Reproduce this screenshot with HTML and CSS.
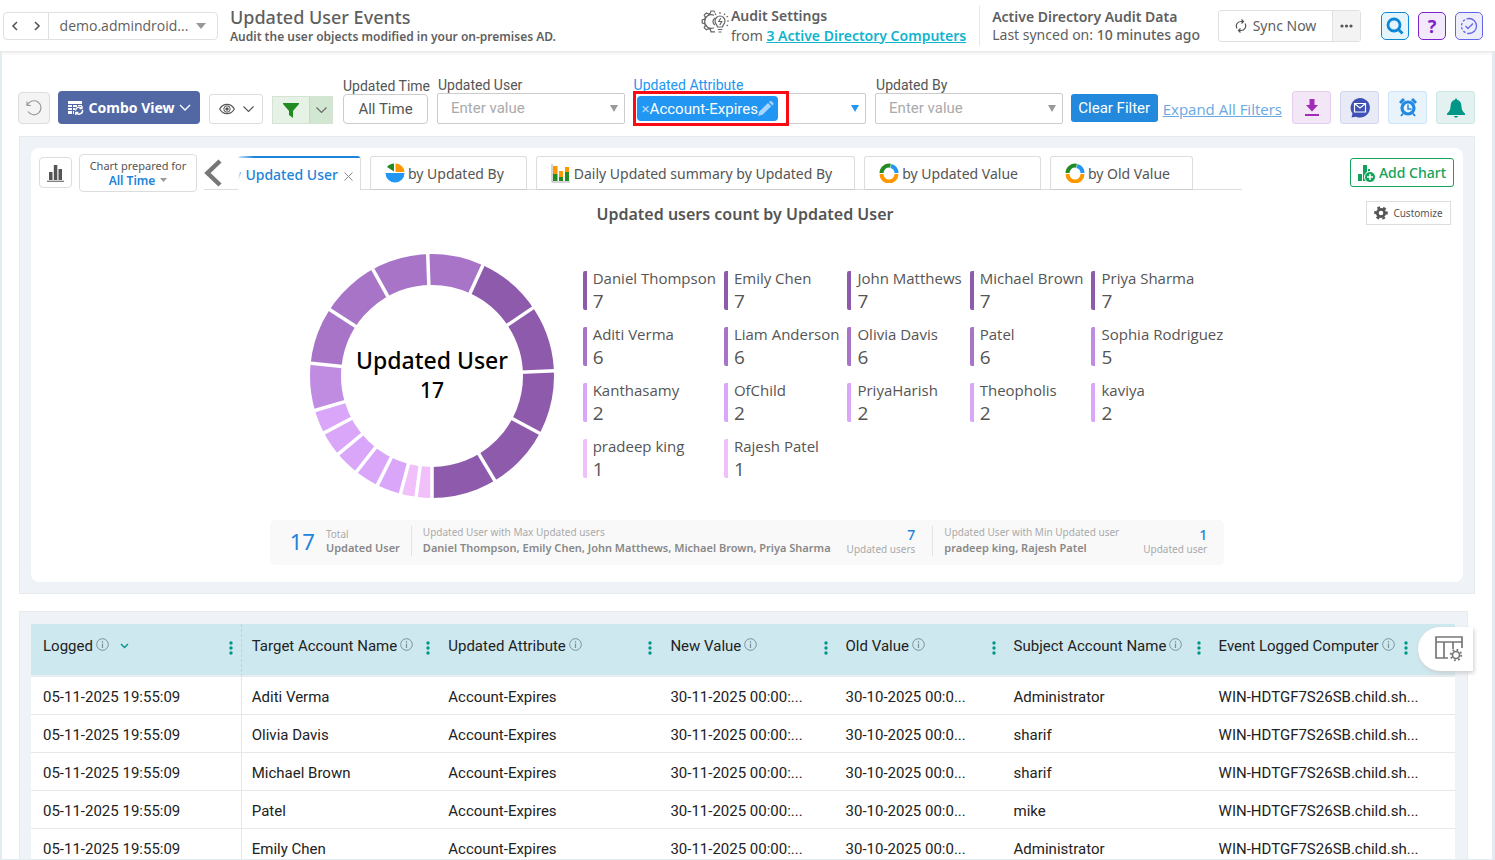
FILE: index.html
```html
<!DOCTYPE html>
<html lang="en">
<head>
<meta charset="utf-8">
<title>Updated User Events</title>
<link rel="stylesheet" href="styles.css">
</head>
<body>
<header class="topbar">
  <div class="nav">
    <button class="nav-btn" aria-label="Back"><svg width="8" height="10" viewBox="0 0 8 10"><path d="M6 1 2 5l4 4" fill="none" stroke="#555" stroke-width="1.6"/></svg></button>
    <button class="nav-btn" aria-label="Forward"><svg width="8" height="10" viewBox="0 0 8 10"><path d="M2 1l4 4-4 4" fill="none" stroke="#555" stroke-width="1.6"/></svg></button>
    <button class="tenant"><span>demo.admindroid...</span><svg width="10" height="6" viewBox="0 0 10 6"><path d="M0 0h10L5 6z" fill="#999"/></svg></button>
  </div>
  <div class="heading">
    <h1>Updated User Events</h1>
    <p>Audit the user objects modified in your on-premises AD.</p>
  </div>
  <div class="audit">
    <svg width="28" height="24" viewBox="0 0 28 24" fill="none" stroke="#666" stroke-width="1.2">
      <path d="M14 2.5l-1-1.5h-3l-.8 2.4-1.6.7L5.300 3 3.200 5.200l1.200 2.200-.7 1.600L1.200 10v3l2.500.8.7 1.600-1.200 2.300 2.100 2.100 2.300-1.200 1.600.7.800 2.500h4M13 5.200a6.800 6.800 0 1 0 0 12.600M14 8a4 4 0 0 0 0 7"/>
      <path d="M16.500 17c0-2-2.500-3-2.500-6a5 5 0 0 1 10 0c0 3-2.500 4-2.500 6zM16.800 19.500h4.500M17.500 22h3M19.800 8l-2 3.500h3l-2 3.500"/>
      <path d="M19 2v2M14 3.500l1 1.500M24 3.500l-1 1.500M25.500 7l1.500-.8M26 11h2M25.500 15l1.500.8"/>
    </svg>
    <div><strong>Audit Settings</strong><div>from <a href="#">3 Active Directory Computers</a></div></div>
  </div>
  <div class="sync-info"><strong>Active Directory Audit Data</strong><div>Last synced on: <b>10 minutes ago</b></div></div>
  <div class="sync">
    <button class="sync-now"><svg width="12" height="14" viewBox="0 0 12 14" fill="none" stroke="#555" stroke-width="1.200"><path d="M2 9.500A4.600 4.600 0 0 1 6 2.500h2M10 4.500a4.600 4.600 0 0 1-4 7H4M6.500.5l2 2-2 2M5.500 9.500l-2 2 2 2"/></svg>Sync Now</button>
    <button class="sync-more" aria-label="More sync options"><svg width="13" height="4" viewBox="0 0 13 4" fill="#555"><circle cx="2" cy="2" r="1.600"/><circle cx="6.500" cy="2" r="1.600"/><circle cx="11" cy="2" r="1.600"/></svg></button>
  </div>
  <div class="tools">
    <button class="tool tool-search" aria-label="Search"><svg width="18" height="18" viewBox="0 0 18 18" fill="none" stroke="#0f87d6" stroke-width="2.800"><circle cx="8" cy="8" r="6"/><path d="M11.500 11.500l5 5"/></svg></button>
    <button class="tool tool-help" aria-label="Help">?</button>
    <button class="tool tool-check" aria-label="Status"><svg width="18" height="18" viewBox="0 0 18 18" fill="none" stroke="#6366e8" stroke-width="1.300"><path d="M9 1.500a7.500 7.500 0 0 1 0 15M5.500 9l2.500 2.500L13 6.500"/><path d="M9 1.500a7.500 7.500 0 0 0 0 15" stroke-dasharray="2.500 1.800"/></svg></button>
  </div>
</header>

<main class="page">
  <div class="toolbar">
    <button class="btn-reset" aria-label="Reset"><svg width="16" height="16" viewBox="0 0 16 16" fill="none" stroke="#999" stroke-width="1.200"><path d="M1.500 5A7 7 0 1 1 2 11.500M1 1.500V5.500h4"/></svg></button>
    <button class="btn-combo">
      <svg width="17" height="16" viewBox="0 0 17 16"><path d="M1 1h14v3H1zM1 5h4v2H1zM6 5h4v2H6zM1 8h4v2H1zM6 8h2v2H6zM1 11h4v3H1zM6 11h1v3H6zM11 5h4v1h-4z" fill="#fff"/><path d="M8.500 10.500a3.500 3.500 0 0 1 6-2.300M15.500 10a3.500 3.500 0 0 1-6 3M15 6v2.600h-2.600M8.800 15v-2.500h2.600" fill="none" stroke="#fff" stroke-width="1.400"/></svg>
      <span>Combo View</span>
      <svg width="12" height="7" viewBox="0 0 12 7"><path d="M1 1l5 5 5-5" fill="none" stroke="#fff" stroke-width="1.300"/></svg>
    </button>
    <button class="btn-eye" aria-label="Visibility">
      <svg width="16" height="12" viewBox="0 0 16 12"><path d="M.7 6C4-.2 12-.2 15.300 6 12 12.200 4 12.200.7 6z" fill="none" stroke="#555" stroke-width="1.200"/><circle cx="8" cy="6" r="3.200" fill="none" stroke="#555"/><circle cx="8" cy="6" r="1.700" fill="#555"/></svg>
      <svg width="11" height="6" viewBox="0 0 11 6"><path d="M.5.5l5 5 5-5" fill="none" stroke="#555" stroke-width="1.100"/></svg>
    </button>
    <div class="filter-toggle">
      <button aria-label="Filter"><svg width="16" height="15" viewBox="0 0 16 15"><path d="M0 0h16v1L10 8v7l-4-3V8L0 1z" fill="#218c21"/></svg></button>
      <button class="filter-menu" aria-label="Filter menu"><svg width="11" height="6" viewBox="0 0 11 6"><path d="M.5.5l5 5 5-5" fill="none" stroke="#666" stroke-width="1.100"/></svg></button>
    </div>
    <div class="filters">
      <div class="field field-time"><label for="f-time">Updated Time</label><button id="f-time" class="time-btn">All Time</button></div>
      <div class="field"><label for="f-user">Updated User</label><div class="combo"><input id="f-user" placeholder="Enter value"><svg width="8" height="7" viewBox="0 0 8 7"><path d="M0 0h8L4 7z" fill="#999"/></svg></div></div>
      <div class="field field-wide"><label for="f-attr" class="active">Updated Attribute</label>
        <div class="combo"><div class="chip"><button aria-label="Remove">×</button><span>Account-Expires</span><svg width="16" height="15" viewBox="0 0 16 15" fill="#a9d5fb"><path d="M0 15l1.300-4.500L10 2l3.200 3.200-8.700 8.500zM11 1l1-.8c.6-.4 1.300-.2 1.700.2l1.500 1.500c.5.500.5 1.200 0 1.700l-.9.8z"/></svg></div><input id="f-attr"><svg width="8" height="7" viewBox="0 0 8 7"><path d="M0 0h8L4 7z" fill="#2196f3"/></svg><div class="marker"></div></div></div>
      <div class="field"><label for="f-by">Updated By</label><div class="combo"><input id="f-by" placeholder="Enter value"><svg width="8" height="7" viewBox="0 0 8 7"><path d="M0 0h8L4 7z" fill="#999"/></svg></div></div>
    </div>
    <button class="btn-clear">Clear Filter</button>
    <a class="expand" href="#">Expand All Filters</a>
    <div class="actions">
      <button class="act act-download" aria-label="Download"><svg width="16" height="17" viewBox="0 0 16 17" fill="#a22ab8"><path d="M5.500 0h5v6H14l-6 6.500L2 6h3.500zM1 15h14v2H1z"/></svg></button>
      <button class="act act-mail" aria-label="Mail"><svg width="20" height="20" viewBox="0 0 20 20"><path d="M10 0a9.800 9.800 0 1 1-4 18.700L1.500 19.500l1-4A9.800 9.800 0 0 1 10 0z" fill="#3f51b5"/><path d="M4.500 5.500h11v8.500h-11zM4.500 5.500l5.500 4.500 5.500-4.500" fill="none" stroke="#fff" stroke-width="1.200"/></svg></button>
      <button class="act act-alarm" aria-label="Schedule"><svg width="18" height="19" viewBox="0 0 18 19" fill="none" stroke="#2389e0"><circle cx="9" cy="10" r="6" stroke-width="3.200" fill="#e8f3fc"/><path d="M9 6.500V11h3.500" stroke-width="1.500"/><path d="M1 5l4-4M17 5l-4-4" stroke-width="3"/><path d="M4 15.500L2 18M14 15.500l2 2.500" stroke-width="2"/></svg></button>
      <button class="act act-bell" aria-label="Alerts"><svg width="18" height="20" viewBox="0 0 18 20" fill="#009688"><path d="M9 0l1.200 1.800c3 .8 4 3.200 4.200 6.200.2 4 1.600 6 3.600 7.500v1.500H0v-1.500c2-1.500 3.400-3.500 3.600-7.500.2-3 1.200-5.400 4.200-6.200zM6.500 18h5L9 20z"/></svg></button>
    </div>
  </div>

  <section class="panel chart-panel">
    <div class="card">
      <div class="chart-head">
        <button class="chart-type" aria-label="Chart type"><svg width="17" height="18" viewBox="0 0 17 18" fill="#555"><path d="M2 8h3.500v8H2zM6.800 1h3.500v15H6.800zM11.500 5H15v11h-3.500zM0 16.800h17v1H0z"/></svg></button>
        <button class="chart-range"><span>Chart prepared for</span><b>All Time <svg width="7" height="4" viewBox="0 0 7 4"><path d="M0 0h7L3.500 4z" fill="#999"/></svg></b></button>
        <div class="tabs" role="tablist">
          <button class="tab-prev" aria-label="Previous"><svg width="18" height="28" viewBox="0 0 18 28"><path d="M16 2L3.500 14 16 26" fill="none" stroke="#777" stroke-width="4.500"/></svg></button>
          <button class="tab tab-active" role="tab"><span class="tab-fade">y</span><span>Updated User</span><svg width="9" height="9" viewBox="0 0 9 9"><path d="M.5.5l8 8M8.500.5l-8 8" stroke="#888"/></svg></button>
          <button class="tab" role="tab"><svg width="20" height="20" viewBox="0 0 20 20"><path d="M10 10H.5a9.500 9.500 0 0 0 19 0z" fill="#2196f3"/><path d="M10.500 9V.5A9 9 0 0 1 19.500 9z" fill="#ff9800"/><path d="M9 8.500L2 4A9 9 0 0 1 9 .5z" fill="#228b22"/></svg>by Updated By</button>
          <button class="tab tab-daily" role="tab"><svg width="20" height="20" viewBox="0 0 20 20"><path d="M1 1v18h18" fill="none" stroke="#aaa"/><path d="M2 3h4.500v8H2zM8 8h4v6H8zM14 4h4v5h-4z" fill="#ff9800"/><path d="M2 11h4.500v7H2zM8 14h4v4H8zM14 9h4v9h-4z" fill="#228b22"/></svg>Daily Updated summary by Updated By</button>
          <button class="tab" role="tab"><svg width="20" height="20" viewBox="0 0 20 20" fill="none" stroke-width="4"><path d="M2.500 10a7.500 7.500 0 0 1 9-7.300" stroke="#228b22"/><path d="M12 3a7.500 7.500 0 0 1 5.500 7" stroke="#2196f3"/><path d="M2.500 11a7.500 7.500 0 0 0 15 0" stroke="#ff9800"/></svg>by Updated Value</button>
          <button class="tab" role="tab"><svg width="20" height="20" viewBox="0 0 20 20" fill="none" stroke-width="4"><path d="M2.500 10a7.500 7.500 0 0 1 9-7.300" stroke="#228b22"/><path d="M12 3a7.500 7.500 0 0 1 5.500 7" stroke="#2196f3"/><path d="M2.500 11a7.500 7.500 0 0 0 15 0" stroke="#ff9800"/></svg>by Old Value</button>
        </div>
        <button class="add-chart"><svg width="17" height="18" viewBox="0 0 17 18"><path d="M0 10h4v7H0zM5 1h4v16H5zM10 5h2v4h-2z" fill="#12a35b"/><circle cx="12" cy="13" r="5.500" fill="#12a35b" stroke="#fff"/><path d="M12 10v6M9 13h6" stroke="#fff" stroke-width="1.500"/></svg>Add Chart</button>
      </div>
      <div class="chart-title">
        <h2>Updated users count by Updated User</h2>
        <button class="customize"><svg width="14" height="14" viewBox="0 0 14 14"><circle cx="7" cy="7" r="3.700" fill="none" stroke="#555" stroke-width="2.800"/><circle cx="7" cy="7" r="5.700" fill="none" stroke="#555" stroke-width="2.200" stroke-dasharray="2.980 2.980" transform="rotate(-15 7 7)"/></svg>Customize</button>
      </div>
      <div class="chart-body">
        <svg class="donut" width="246" height="246" viewBox="-123 -123 246 246">
          <g fill="none" stroke-width="31" transform="rotate(90)">
            <circle r="106.500" pathLength="360" stroke="#f1bff9" stroke-dasharray="15 345"/>
            <circle r="106.500" pathLength="360" stroke="#d9a6f9" stroke-dasharray="58.600 301.400" stroke-dashoffset="-15"/>
            <circle r="106.500" pathLength="360" stroke="#c08ce2" stroke-dasharray="22.400 337.600" stroke-dashoffset="-73.600"/>
            <circle r="106.500" pathLength="360" stroke="#a774c8" stroke-dasharray="108.700 251.300" stroke-dashoffset="-96"/>
            <circle r="106.500" pathLength="360" stroke="#8e5bac" stroke-dasharray="155.300 204.700" stroke-dashoffset="-204.700"/>
          </g>
          <g stroke="#fff" stroke-width="3.500">
            <path d="M0 88v36"/><path d="M0 88v36" transform="rotate(7.500)"/><path d="M0 88v36" transform="rotate(15)"/><path d="M0 88v36" transform="rotate(26.600)"/><path d="M0 88v36" transform="rotate(38.300)"/><path d="M0 88v36" transform="rotate(50.200)"/><path d="M0 88v36" transform="rotate(62.200)"/><path d="M0 88v36" transform="rotate(73.600)"/><path d="M0 88v36" transform="rotate(96)"/><path d="M0 88v36" transform="rotate(123)"/><path d="M0 88v36" transform="rotate(151)"/><path d="M0 88v36" transform="rotate(178)"/><path d="M0 88v36" transform="rotate(204.700)"/><path d="M0 88v36" transform="rotate(236)"/><path d="M0 88v36" transform="rotate(267.500)"/><path d="M0 88v36" transform="rotate(298)"/><path d="M0 88v36" transform="rotate(329)"/>
          </g>
          <text class="donut-name" y="-7">Updated User</text>
          <text class="donut-total" y="22">17</text>
        </svg>
        <ul class="legend">
          <li class="c7">Daniel Thompson<b>7</b></li><li class="c7">Emily Chen<b>7</b></li><li class="c7">John Matthews<b>7</b></li><li class="c7">Michael Brown<b>7</b></li><li class="c7">Priya Sharma<b>7</b></li>
          <li class="c6">Aditi Verma<b>6</b></li><li class="c6">Liam Anderson<b>6</b></li><li class="c6">Olivia Davis<b>6</b></li><li class="c6">Patel<b>6</b></li><li class="c5">Sophia Rodriguez<b>5</b></li>
          <li class="c2">Kanthasamy<b>2</b></li><li class="c2">OfChild<b>2</b></li><li class="c2">PriyaHarish<b>2</b></li><li class="c2">Theopholis<b>2</b></li><li class="c2">kaviya<b>2</b></li>
          <li class="c1">pradeep king<b>1</b></li><li class="c1">Rajesh Patel<b>1</b></li>
        </ul>
      </div>
      <div class="summary">
        <div class="sum-total"><span class="big">17</span><div>Total<b>Updated User</b></div></div>
        <div class="sum-item"><div>Updated User with Max Updated users<b>Daniel Thompson, Emily Chen, John Matthews, Michael Brown, Priya Sharma</b></div><div class="sum-count"><em>7</em>Updated users</div></div>
        <div class="sum-item sum-min"><div>Updated User with Min Updated user<b>pradeep king, Rajesh Patel</b></div><div class="sum-count"><em>1</em>Updated user</div></div>
      </div>
    </div>
  </section>

  <section class="panel grid-panel">
    <svg width="0" height="0" class="defs"><symbol id="info" viewBox="0 0 13 13"><circle cx="6.500" cy="6.500" r="5.800" fill="none" stroke="#7d9299"/><path d="M6.500 5.500V10M6.500 3v1.500" stroke="#7d9299" stroke-width="1.200"/></symbol><symbol id="dots" viewBox="0 0 4 14"><g fill="#009688"><circle cx="2" cy="2" r="1.700"/><circle cx="2" cy="7" r="1.700"/><circle cx="2" cy="12" r="1.700"/></g></symbol></svg>
    <table>
      <colgroup><col class="w-logged"><col class="w-target"><col class="w-attr"><col class="w-new"><col class="w-old"><col class="w-subject"><col class="w-computer"></colgroup>
      <thead><tr>
        <th><div>Logged<svg class="info"><use href="#info"/></svg><svg class="sort" width="9" height="6" viewBox="0 0 9 6"><path d="M1 1l3.500 3.500L8 1" fill="none" stroke="#009688" stroke-width="1.400"/></svg><svg class="dots"><use href="#dots"/></svg></div></th>
        <th><div>Target Account Name<svg class="info"><use href="#info"/></svg><svg class="dots"><use href="#dots"/></svg></div></th>
        <th><div>Updated Attribute<svg class="info"><use href="#info"/></svg><svg class="dots"><use href="#dots"/></svg></div></th>
        <th><div>New Value<svg class="info"><use href="#info"/></svg><svg class="dots"><use href="#dots"/></svg></div></th>
        <th><div>Old Value<svg class="info"><use href="#info"/></svg><svg class="dots"><use href="#dots"/></svg></div></th>
        <th><div>Subject Account Name<svg class="info"><use href="#info"/></svg><svg class="dots"><use href="#dots"/></svg></div></th>
        <th><div>Event Logged Computer<svg class="info"><use href="#info"/></svg><svg class="dots"><use href="#dots"/></svg></div></th>
      </tr></thead>
      <tbody>
        <tr><td>05-11-2025 19:55:09</td><td>Aditi Verma</td><td>Account-Expires</td><td>30-11-2025 00:00:...</td><td>30-10-2025 00:0...</td><td>Administrator</td><td>WIN-HDTGF7S26SB.child.sh...</td></tr>
        <tr><td>05-11-2025 19:55:09</td><td>Olivia Davis</td><td>Account-Expires</td><td>30-11-2025 00:00:...</td><td>30-10-2025 00:0...</td><td>sharif</td><td>WIN-HDTGF7S26SB.child.sh...</td></tr>
        <tr><td>05-11-2025 19:55:09</td><td>Michael Brown</td><td>Account-Expires</td><td>30-11-2025 00:00:...</td><td>30-10-2025 00:0...</td><td>sharif</td><td>WIN-HDTGF7S26SB.child.sh...</td></tr>
        <tr><td>05-11-2025 19:55:09</td><td>Patel</td><td>Account-Expires</td><td>30-11-2025 00:00:...</td><td>30-10-2025 00:0...</td><td>mike</td><td>WIN-HDTGF7S26SB.child.sh...</td></tr>
        <tr><td>05-11-2025 19:55:09</td><td>Emily Chen</td><td>Account-Expires</td><td>30-11-2025 00:00:...</td><td>30-10-2025 00:0...</td><td>Administrator</td><td>WIN-HDTGF7S26SB.child.sh...</td></tr>
      </tbody>
    </table>
    <button class="columns-btn" aria-label="Choose columns"><svg width="30" height="28" viewBox="0 0 30 28" fill="none" stroke="#777" stroke-width="1.700"><path d="M14 23H2V2h26v11M2 7h26M10 7v16M19 7v7"/><circle cx="22" cy="20" r="3.500"/><circle cx="22" cy="20" r="5.200" stroke-dasharray="1.700 2.380" stroke-width="2"/></svg></button>
  </section>
</main>
</body>
</html>
```
FILE: styles.css
```css
* { box-sizing: border-box; }
body { margin: 0; height: 100vh; overflow: hidden; display: flex; flex-direction: column; background: #fff; color: #555; font-family: "Noto Sans", "Open Sans", sans-serif; font-size: 14px; }
button, input { font: inherit; color: inherit; margin: 0; padding: 0; background: none; border: 0; }
button { display: flex; align-items: center; justify-content: center; white-space: nowrap; }
h1, h2, p, ul { margin: 0; padding: 0; }
svg { flex: none; display: block; }

.topbar { flex: none; display: flex; align-items: center; height: 51px; padding: 0 12px 0 3px; color: #5f5f5f; white-space: nowrap; box-shadow: 0 1px 4px #ddd; }
.topbar strong { font-weight: 600; }
.topbar b { font-weight: 500; }
.nav { display: flex; height: 28px; border: 1px solid #e0e0e0; border-radius: 4px; }
.nav-btn { width: 22px; }
.tenant { gap: 8px; width: 169px; border-left: 1px solid #e0e0e0; font-family: "Open Sans", sans-serif; }
.heading { margin-left: 12px; }
.heading h1 { font-size: 18px; line-height: 22px; font-weight: 500; }
.heading p { font-size: 12px; line-height: 18px; font-weight: 600; }
.audit { display: flex; align-items: flex-start; gap: 2px; margin-left: auto; padding-right: 13px; border-right: 1px solid #e8e8e8; line-height: 20px; }
.audit svg { margin-top: 4px; }
.audit a { color: #11b4cf; font-weight: 600; text-decoration: underline; }
.sync-info { margin: 0 18px 0 12px; line-height: 18px; }
.sync { display: flex; height: 32px; border: 1px solid #e0e0e0; border-radius: 3px; }
.sync-now { gap: 6px; width: 113px; }
.sync-more { width: 28px; background: #f3f3f3; border-left: 1px solid #e0e0e0; }
.tools { display: flex; gap: 9px; margin-left: 20px; }
.tool { width: 28px; height: 28px; border: 1px solid; border-radius: 5px; }
.tool-search { color: #0f87d6; background: #e6f4fb; }
.tool-help { color: #7e22ce; background: #f2e9fb; font-size: 18px; font-weight: 700; }
.tool-check { color: #6366e8; background: #ededfc; }

.page { flex: 1; min-height: 0; overflow: hidden; border: solid #e2ebef; border-width: 0 3px 1px 2px; padding: 25px 17px 0 16px; }
.toolbar { display: flex; align-items: flex-end; height: 48px; white-space: nowrap; font-family: Roboto, sans-serif; }
.btn-reset { width: 32px; height: 32px; margin-right: 8px; border: 1px solid #ddd; border-radius: 4px; background: #f4f4f4; }
.btn-combo { width: 142px; height: 33px; margin-right: 9px; gap: 5px; border-radius: 4px; background: #5168a4; color: #fff; font: 700 14px "Noto Sans", sans-serif; }
.btn-eye { width: 54px; height: 30px; gap: 8px; margin-right: 9px; border: 1px solid #ddd; border-radius: 3px; }
.filter-toggle { display: flex; height: 28px; width: 61px; margin-right: 10px; border: 1px solid #d5e3d5; background: #e7f2e7; }
.filter-toggle button { flex: 1; }
.filter-toggle .filter-menu { flex: none; width: 23px; background: #d2e7d2; border-left: 1px solid #c3dbc3; }
.filters { flex: 1; min-width: 0; display: flex; align-items: flex-end; gap: 9px; }
.field { flex: 188 1 0; min-width: 0; }
.field-wide { flex-grow: 233; }
.field-time { flex: 0 0 85px; }
.field label { display: block; padding-left: 1px; line-height: 16px; }
.field .active, .field-time label { padding-left: 0; }
.field .active { color: #2196f3; }
.time-btn { width: 100%; height: 30px; border: 1px solid #ccc; border-radius: 4px; font-size: 15px; }
.combo { position: relative; display: flex; align-items: center; height: 31px; padding: 0 6px 0 2px; border: 1px solid #ccc; border-radius: 2px; }
.combo input { flex: 1; min-width: 0; height: 26px; padding: 0 0 2px 11px; font-size: 15px; outline: 0; }
.combo input::placeholder { color: #aaa; }
.chip { display: flex; align-items: center; height: 25px; padding: 0 4px 0 5px; border-radius: 4px; background: #2196f3; color: #fff; font-size: 15px; }
.chip button { color: #a9d5fb; }
.marker { position: absolute; inset: -3px 76px -3px -2px; border: 3px solid #f80b12; }
.btn-clear { width: 87px; height: 28px; margin: 0 5px 2px 8px; border-radius: 3px; background: #2389dc; color: #fff; font-size: 15px; }
.expand { margin-bottom: 5px; color: #69a9e2; font: 15px/20px "Open Sans", sans-serif; }
.actions { display: flex; gap: 9px; margin-left: 10px; }
.act { width: 39px; height: 33px; border: 1px solid; border-radius: 3px; }
.act-download { background: #f3e6f7; border-color: #e5cdec; }
.act-mail { background: #e8eaf6; border-color: #d2d6ec; }
.act-alarm { background: #e8f3fc; border-color: #cfe5f7; }
.act-bell { background: #e3f2f1; border-color: #cce6e4; }

.panel { margin-left: 1px; background: #eff3f7; border: 1px solid #e7ebee; padding: 11px; }
.chart-panel { margin-top: 12px; }
.card { height: 434px; padding: 6px 8px 0; border-radius: 8px; background: #fff; }
.chart-head { display: flex; align-items: center; height: 37px; }
.chart-type { width: 33px; height: 31px; margin-right: 7px; border: 1px solid #ddd; border-radius: 4px; }
.chart-range { flex-direction: column; width: 118px; height: 38px; border: 1px solid #ddd; border-radius: 4px; font-size: 11px; line-height: 15px; }
.chart-range b { display: flex; align-items: center; gap: 5px; color: #2083dc; font-size: 12px; font-weight: 600; }
.tabs { flex: 0 1 1038px; display: flex; align-items: flex-end; height: 34px; margin: 1px auto 0 7px; border-bottom: 1px solid #ddd; }
.tab-prev { width: 18px; height: 33px; margin-right: 16px; }
.tab { height: 34px; margin: 0 9px -1px 0; padding: 0 22px 0 14px; gap: 3px; border: 1px solid #ddd; border-bottom-color: #ccc; border-radius: 3px 3px 0 0; }
.tab-active { padding: 3px 7px 0 0; gap: 4px; border: 0; border-right: 1px solid #ddd; color: #2083dc; font-weight: 500; background: linear-gradient(90deg, #d0e7fa, #2083dc 16px) top / 100% 2px no-repeat, #fff; }
.tab-active svg { margin: 4px 0 0 2px; }
.tab-fade { margin-left: -4px; mask-image: linear-gradient(90deg, transparent 4px, rgba(0, 0, 0, .6)); }
.add-chart { width: 104px; height: 29px; margin-right: 1px; gap: 4px; border: 1px solid #12a35b; border-radius: 3px; color: #12a35b; font-weight: 500; }
.chart-title { display: grid; grid-template-columns: 1fr auto 1fr; align-items: center; height: 46px; padding-right: 4px; }
.chart-title h2 { grid-column: 2; font-size: 16px; line-height: 24px; font-weight: 600; }
.customize { justify-self: end; width: 85px; height: 24px; margin-top: -2px; gap: 5px; border: 1px solid #ddd; font-size: 10px; }
.chart-body { display: flex; justify-content: center; align-items: flex-start; gap: 28px; height: 283px; padding: 16px 0 0 38px; }
.donut-name, .donut-total { text-anchor: middle; fill: #000; font-weight: 500; }
.donut-name { font-size: 23px; }
.donut-total { font-size: 21px; }
.legend { display: grid; grid-template-columns: repeat(5, auto); gap: 17px 8px; margin-top: 18px; list-style: none; font-family: "Open Sans", sans-serif; font-size: 15px; }
.legend li { height: 39px; padding-left: 6px; border-left: 4px solid; border-radius: 2px; line-height: 15px; white-space: nowrap; }
.legend b { display: block; font-size: 19px; line-height: 30px; font-weight: 400; }
.legend .c7 { border-color: #8e5bac; }
.legend .c6 { border-color: #a774c8; }
.legend .c5 { border-color: #c08ce2; }
.legend .c2 { border-color: #d9a6f9; }
.legend .c1 { border-color: #f1bff9; }
.summary { display: flex; align-items: center; width: fit-content; height: 45px; margin: 0 auto; padding: 0 17px 4px 20px; border-radius: 5px; background: #f9f9f9; color: #aaa; font-size: 10px; line-height: 13px; white-space: nowrap; }
.summary b { display: block; color: #888; font-size: 11px; line-height: 17px; font-weight: 600; }
.sum-total { display: flex; align-items: center; gap: 11px; }
.sum-total b { line-height: 13px; }
.big { color: #2083dc; font-size: 22px; line-height: 30px; }
.sum-item { display: flex; gap: 16px; margin-left: 11px; padding-left: 11px; border-left: 1px solid #e3e3e3; }
.sum-item + .sum-item { margin-left: 17px; }
.sum-count { text-align: right; }
.sum-count em { display: block; color: #2083dc; font: 500 14px/17px "Noto Sans", sans-serif; }
.sum-item.sum-min { gap: 24px; }

.grid-panel { position: relative; margin: 17px 7px 0 1px; padding: 12px 12px 0 11px; font-family: Roboto, sans-serif; }
.defs { position: absolute; }
table { width: 100%; table-layout: fixed; border-collapse: separate; border-spacing: 0; background: #fff; color: #222; font-size: 15px; white-space: nowrap; }
.w-logged { width: 14.8%; }
.w-target { width: 13.8%; }
.w-attr { width: 15.6%; }
.w-new { width: 12.3%; }
.w-old { width: 11.8%; }
.w-subject { width: 14.4%; }
.w-computer { width: 17.3%; }
th { height: 53px; padding: 0 8px 7px 10px; background: #cee8ef; border-bottom: 2px solid #e8ecee; font-weight: 400; text-align: left; }
th:last-child { padding-right: 47px; }
th > div { display: flex; align-items: center; }
.info { width: 13px; height: 13px; margin: -3px 0 0 3px; }
.sort { margin-left: 11px; }
.dots { width: 4px; height: 14px; margin: 4px 0 0 auto; }
td { height: 38px; padding: 2px 0 0 10px; border-bottom: 1px solid #e8e8e8; overflow: hidden; }
th:first-child, td:first-child { padding-left: 12px; border-right: 1px solid #e6e6e6; }
th:first-child { border-right: 1px dashed #bcd3d9; }
.columns-btn { position: absolute; top: 15px; right: -6px; width: 55px; height: 44px; padding-left: 6px; border-radius: 22px 0 0 22px; background: #fff; box-shadow: 1px 2px 4px #ccc; }
```
